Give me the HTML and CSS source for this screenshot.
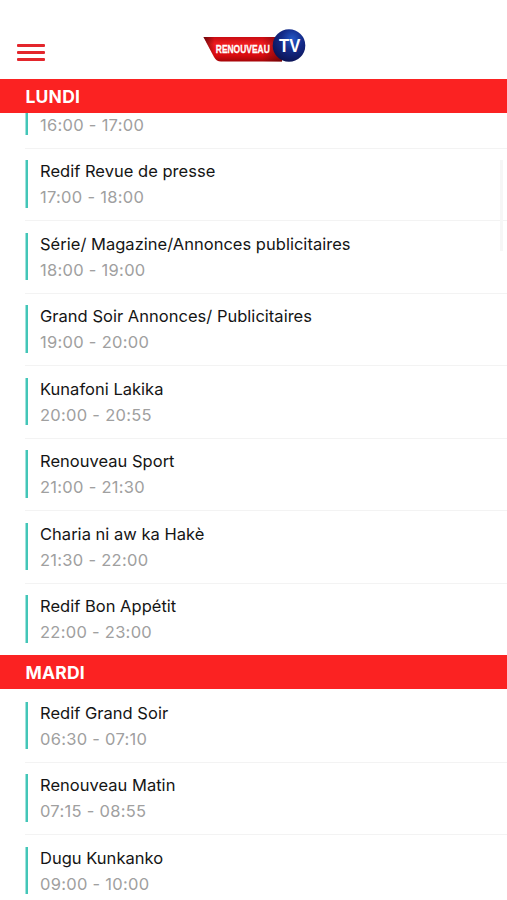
FILE: index.html
```html
<!DOCTYPE html>
<html lang="fr">
<head>
<meta charset="utf-8">
<title>Renouveau TV</title>
<link rel="stylesheet" href="styles.css">
</head>
<body>
<div class="app">
  <header class="topbar">
    <button class="menu" aria-label="Menu"><span></span><span></span><span></span></button>
    <svg class="logo" width="104" height="36" viewBox="0 0 104 36">
      <defs>
        <linearGradient id="red" x1="0" y1="0" x2="0" y2="1">
          <stop offset="0" stop-color="#c90c12"/><stop offset=".3" stop-color="#f01c20"/><stop offset=".75" stop-color="#d80b10"/><stop offset="1" stop-color="#a50508"/>
        </linearGradient>
        <linearGradient id="edge" x1="0" y1="0" x2="1" y2="0">
          <stop offset="0" stop-color="#4a0508" stop-opacity=".75"/><stop offset=".14" stop-color="#4a0508" stop-opacity="0"/><stop offset=".75" stop-color="#4a0508" stop-opacity="0"/><stop offset="1" stop-color="#4a0508" stop-opacity=".6"/>
        </linearGradient>
        <radialGradient id="blue" cx=".6" cy=".3" r=".75">
          <stop offset="0" stop-color="#2459c8"/><stop offset=".45" stop-color="#142a88"/><stop offset="1" stop-color="#0b1150"/>
        </radialGradient>
      </defs>
      <path d="M1.500 9H80V33.500H19Q14.500 33.500 12 29Z" fill="url(#red)"/>
      <path d="M1.500 9H80V33.500H19Q14.500 33.500 12 29Z" fill="url(#edge)"/>
      <circle cx="87" cy="17.500" r="16.300" fill="url(#blue)"/>
      <text class="logo-name" transform="translate(13.800 25) scale(.735 1)">RENOUVEAU</text>
      <text class="logo-tv" transform="translate(77 24) scale(.9 1)">TV</text>
    </svg>
  </header>
  <main class="guide">
    <h2 class="day">LUNDI</h2>
    <div class="list">
      <div class="shows scrolled">
        <div class="show"><div class="info"><p>&nbsp;</p><time>16:00 - 17:00</time></div></div>
        <div class="show"><div class="info"><p>Redif Revue de presse</p><time>17:00 - 18:00</time></div></div>
        <div class="show"><div class="info"><p>Série/ Magazine/Annonces publicitaires</p><time>18:00 - 19:00</time></div></div>
        <div class="show"><div class="info"><p>Grand Soir Annonces/ Publicitaires</p><time>19:00 - 20:00</time></div></div>
        <div class="show"><div class="info"><p>Kunafoni Lakika</p><time>20:00 - 20:55</time></div></div>
        <div class="show"><div class="info"><p>Renouveau Sport</p><time>21:00 - 21:30</time></div></div>
        <div class="show"><div class="info"><p>Charia ni aw ka Hakè</p><time>21:30 - 22:00</time></div></div>
        <div class="show"><div class="info"><p>Redif Bon Appétit</p><time>22:00 - 23:00</time></div></div>
      </div>
      <h2 class="day">MARDI</h2>
      <div class="shows">
        <div class="show"><div class="info"><p>Redif Grand Soir</p><time>06:30 - 07:10</time></div></div>
        <div class="show"><div class="info"><p>Renouveau Matin</p><time>07:15 - 08:55</time></div></div>
        <div class="show"><div class="info"><p>Dugu Kunkanko</p><time>09:00 - 10:00</time></div></div>
      </div>
      <div class="scrollbar"></div>
    </div>
  </main>
</div>
</body>
</html>
```
FILE: styles.css
```css
* { box-sizing: border-box; margin: 0; padding: 0; }
body { background: #fff; font-family: Inter, "Liberation Sans", sans-serif; }
.app { height: 900px; display: flex; flex-direction: column; overflow: hidden; }
.topbar { height: 79px; flex: none; display: grid; grid-template-columns: 1fr auto 1fr; align-items: start; padding: 28px 16px 0; }
.menu { display: flex; flex-direction: column; gap: 4.500px; width: 29px; margin: 16px 0 0 1px; border: 0; background: none; }
.menu span { display: block; width: 28px; height: 2.500px; border-radius: 1px; background: #e3262c; }
.logo { display: block; }
.logo-name, .logo-tv { fill: #fff; font-weight: 700; font-family: "Liberation Sans", sans-serif; }
.logo-name { font-size: 11.500px; stroke: #fff; stroke-width: .3px; }
.logo-tv { font-size: 18.500px; }
.guide { flex: 1; min-height: 0; display: flex; flex-direction: column; }
.day { height: 34px; flex: none; padding-left: 25.500px; background: #fb2222; color: #fff; font-size: 17.500px; font-weight: 700; line-height: 36px; letter-spacing: .2px; }
.list { position: relative; flex: 1; min-height: 0; overflow: hidden; }
.scrolled { margin-top: -38px; }
.show { height: 72.500px; margin-left: 25px; padding-top: 12.500px; box-shadow: 0 1px 0 #f3f3f3; }
.show:last-child { box-shadow: none; }
.info { position: relative; height: 47.500px; padding-left: 15px; }
.info::before { content: ""; position: absolute; left: 0; top: 0; width: 3px; height: 100%; background: linear-gradient(to right, #a1e2db 1px, #43c6b8 1px); }
.info p { color: #151515; font-size: 16.500px; line-height: 23px; letter-spacing: .02px; white-space: nowrap; }
.info time { display: block; color: #a0a0a0; font-size: 16.500px; line-height: 28px; letter-spacing: .28px; }
.scrollbar { position: absolute; top: 47px; right: 4px; width: 3px; height: 91px; background: #f6f6f6; }
```
